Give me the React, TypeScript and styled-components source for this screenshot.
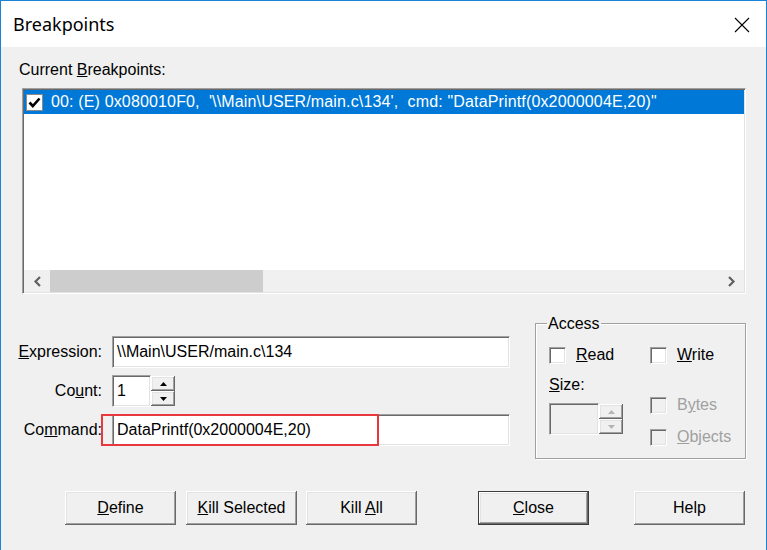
import React from "react";
import styled, { createGlobalStyle } from "styled-components";

const GlobalStyle = createGlobalStyle`
  html, body { margin: 0; padding: 0; background: #ffffff; }
  body {
    font-family: "Liberation Sans", Arial, sans-serif;
    font-size: 16px;
    color: #000000;
  }
  * { box-sizing: border-box; }
`;

const sunken = `
  border-style: solid;
  border-width: 1px;
  border-color: #a0a0a0 #ffffff #ffffff #a0a0a0;
  box-shadow: inset 1px 1px 0 #696969, inset -1px -1px 0 #e3e3e3;
`;

const raised = `
  box-shadow: inset -1px -1px 0 #696969, inset 1px 1px 0 #ffffff,
    inset -2px -2px 0 #a0a0a0, inset 2px 2px 0 #e3e3e3;
`;

const Window = styled.div`
  width: 767px;
  height: 550px;
  display: flex;
  flex-direction: column;
  border: 1px solid #1883d7;
  border-bottom: none;
  overflow: hidden;
`;

const TitleBar = styled.div`
  height: 46px;
  flex-shrink: 0;
  display: flex;
  align-items: center;
  justify-content: space-between;
  padding: 0 16px 0 12px;
  background: #ffffff;
`;

const Title = styled.span`
  font-family: "Noto Sans", "Open Sans", sans-serif;
  font-size: 18px;
  margin-top: -1px;
`;

const CloseGlyph = styled.svg`
  width: 16px;
  height: 16px;
  margin-top: 1px;
`;

const Body = styled.div`
  flex: 1;
  background: #f0f0f0;
  padding: 14px 20px 0 17px;
`;

const SectionLabel = styled.div`
  line-height: 18px;
  padding-left: 1px;
  color: #000;
`;

const ListBox = styled.div`
  ${sunken}
  margin: 9px 0 0 4px;
  height: 206px;
  background: #ffffff;
  display: flex;
  flex-direction: column;
  padding: 1px;
`;

const ListRow = styled.div<{ $selected?: boolean }>`
  height: 24px;
  display: flex;
  align-items: center;
  padding-left: 2px;
  letter-spacing: 0.15px;
  background: ${({ $selected }) => ($selected ? "#0078d7" : "transparent")};
  color: ${({ $selected }) => ($selected ? "#ffffff" : "#000000")};
  white-space: nowrap;
`;

const ListCheck = styled.span`
  width: 17px;
  height: 17px;
  margin-right: 8px;
  background: #ffffff;
  border: 1px solid #8a8a8a;
  display: flex;
  align-items: center;
  justify-content: center;
`;

const ListFill = styled.div`
  flex: 1;
`;

const HScroll = styled.div`
  height: 22px;
  display: flex;
  align-items: stretch;
  background: #f0f0f0;
`;

const ScrollArrow = styled.div`
  width: 26px;
  display: flex;
  align-items: center;
  justify-content: center;
`;

const ScrollThumb = styled.div`
  width: 213px;
  background: #cdcdcd;
`;

const ScrollTrack = styled.div`
  flex: 1;
`;

const Middle = styled.div`
  display: flex;
  align-items: flex-start;
  margin-top: 20px;
`;

const Form = styled.div`
  width: 493px;
  padding-top: 22px;
  display: grid;
  grid-template-columns: 84px 398px;
  column-gap: 10px;
  row-gap: 7px;
`;

const FieldLabel = styled.label`
  text-align: right;
  line-height: 32px;
  white-space: nowrap;
`;

const FieldCell = styled.div`
  position: relative;
  display: flex;
`;

const TextBox = styled.div<{ $width?: number; $disabled?: boolean }>`
  ${sunken}
  width: ${({ $width }) => ($width ? `${$width}px` : "100%")};
  height: 32px;
  background: ${({ $disabled }) => ($disabled ? "#f0f0f0" : "#ffffff")};
  padding-left: 4px;
  display: flex;
  align-items: center;
  white-space: nowrap;
`;

const Spinner = styled.div`
  width: 24px;
  height: 32px;
  display: flex;
  flex-direction: column;
  padding: 1px 0;
`;

const SpinButton = styled.div`
  flex: 1;
  background: #f0f0f0;
  ${raised}
  display: flex;
  align-items: center;
  justify-content: center;
`;

const Highlight = styled.div`
  position: absolute;
  left: -11px;
  top: 0;
  width: 278px;
  height: 32px;
  border: 2px solid #e8383d;
  pointer-events: none;
`;

const Group = styled.fieldset`
  width: 211px;
  height: 145px;
  margin: 0 0 0 24px;
  padding: 0 10px 0 13px;
  border: 1px solid #a0a0a0;
  box-shadow: inset 1px 1px 0 #ffffff, 1px 1px 0 #ffffff;
`;

const Legend = styled.legend`
  padding: 0 1px;
  margin-left: -2px;
  line-height: 19px;
`;

const AccessGrid = styled.div`
  display: grid;
  grid-template-columns: 101px 1fr;
  margin-top: 10px;
`;

const CheckItem = styled.div<{ $disabled?: boolean }>`
  height: 24px;
  display: flex;
  align-items: center;
  gap: 10px;
  color: ${({ $disabled }) => ($disabled ? "#a0a0a0" : "#000000")};
  white-space: nowrap;
`;

const SmallCheck = styled.span<{ $disabled?: boolean }>`
  width: 17px;
  height: 17px;
  flex-shrink: 0;
  ${sunken}
  background: ${({ $disabled }) => ($disabled ? "#f0f0f0" : "#ffffff")};
`;

const SizeColumn = styled.div`
  display: flex;
  flex-direction: column;
  padding-top: 9px;
`;

const SizeLabel = styled.div`
  line-height: 18px;
  margin-bottom: 9px;
`;

const SizeSpin = styled.div`
  display: flex;
  width: 74px;
`;

const OptionColumn = styled.div`
  display: flex;
  flex-direction: column;
  gap: 8px;
  padding-top: 26px;
`;

const ButtonRow = styled.div`
  display: flex;
  margin-top: 32px;
  padding-left: 47px;
`;

const Button = styled.button<{ $offset?: number; $default?: boolean }>`
  width: 111px;
  height: 34px;
  margin-left: ${({ $offset }) => $offset ?? 0}px;
  padding: 0;
  font: inherit;
  color: #000;
  background: #f0f0f0;
  border: ${({ $default }) => ($default ? "1px solid #3c3c3c" : "none")};
  ${raised}
  cursor: default;
`;

const Up = ({ disabled }: { disabled?: boolean }) => (
  <svg width="7" height="4" viewBox="0 0 7 4">
    <path d="M3.5 0L7 4H0z" fill={disabled ? "#b4b4b4" : "#000"} />
  </svg>
);

const Down = ({ disabled }: { disabled?: boolean }) => (
  <svg width="7" height="4" viewBox="0 0 7 4">
    <path d="M0 0H7L3.5 4z" fill={disabled ? "#b4b4b4" : "#000"} />
  </svg>
);

export default function App() {
  return (
    <>
      <GlobalStyle />
      <Window>
        <TitleBar>
          <Title>Breakpoints</Title>
          <CloseGlyph viewBox="0 0 16 16">
            <path d="M1 1L15 15M15 1L1 15" stroke="#000" strokeWidth="1.1" />
          </CloseGlyph>
        </TitleBar>
        <Body>
          <SectionLabel>
            Current <u>B</u>reakpoints:
          </SectionLabel>
          <ListBox>
            <ListRow $selected>
              <ListCheck>
                <svg width="13" height="11" viewBox="0 0 13 11">
                  <path d="M1.5 5.5L4.8 9L11.5 1.5" stroke="#000" strokeWidth="2.6" fill="none" />
                </svg>
              </ListCheck>
              00: (E) 0x080010F0,&nbsp; '\\Main\USER/main.c\134',&nbsp; cmd: "DataPrintf(0x2000004E,20)"
            </ListRow>
            <ListFill />
            <HScroll>
              <ScrollArrow>
                <svg width="9" height="11" viewBox="0 0 9 11">
                  <path d="M7 1L2.5 5.5L7 10" stroke="#606060" strokeWidth="2.2" fill="none" />
                </svg>
              </ScrollArrow>
              <ScrollThumb />
              <ScrollTrack />
              <ScrollArrow>
                <svg width="9" height="11" viewBox="0 0 9 11">
                  <path d="M2 1L6.5 5.5L2 10" stroke="#606060" strokeWidth="2.2" fill="none" />
                </svg>
              </ScrollArrow>
            </HScroll>
          </ListBox>

          <Middle>
            <Form>
              <FieldLabel>
                <u>E</u>xpression:
              </FieldLabel>
              <FieldCell>
                <TextBox>\\Main\USER/main.c\134</TextBox>
              </FieldCell>

              <FieldLabel>
                Co<u>u</u>nt:
              </FieldLabel>
              <FieldCell>
                <TextBox $width={39}>1</TextBox>
                <Spinner>
                  <SpinButton>
                    <Up />
                  </SpinButton>
                  <SpinButton>
                    <Down />
                  </SpinButton>
                </Spinner>
              </FieldCell>

              <FieldLabel>
                Co<u>m</u>mand:
              </FieldLabel>
              <FieldCell>
                <TextBox>DataPrintf(0x2000004E,20)</TextBox>
                <Highlight />
              </FieldCell>
            </Form>

            <Group>
              <Legend>Access</Legend>
              <AccessGrid>
                <CheckItem>
                  <SmallCheck />
                  <span>
                    <u>R</u>ead
                  </span>
                </CheckItem>
                <CheckItem>
                  <SmallCheck />
                  <span>
                    <u>W</u>rite
                  </span>
                </CheckItem>
                <SizeColumn>
                  <SizeLabel>
                    <u>S</u>ize:
                  </SizeLabel>
                  <SizeSpin>
                    <TextBox $width={50} $disabled />
                    <Spinner>
                      <SpinButton>
                        <Up disabled />
                      </SpinButton>
                      <SpinButton>
                        <Down disabled />
                      </SpinButton>
                    </Spinner>
                  </SizeSpin>
                </SizeColumn>
                <OptionColumn>
                  <CheckItem $disabled>
                    <SmallCheck $disabled />
                    <span>
                      B<u>y</u>tes
                    </span>
                  </CheckItem>
                  <CheckItem $disabled>
                    <SmallCheck $disabled />
                    <span>
                      <u>O</u>bjects
                    </span>
                  </CheckItem>
                </OptionColumn>
              </AccessGrid>
            </Group>
          </Middle>

          <ButtonRow>
            <Button>
              <u>D</u>efine
            </Button>
            <Button $offset={10}>
              <u>K</u>ill Selected
            </Button>
            <Button $offset={9}>
              Kill <u>A</u>ll
            </Button>
            <Button $offset={61} $default>
              <u>C</u>lose
            </Button>
            <Button $offset={45}>Help</Button>
          </ButtonRow>
        </Body>
      </Window>
    </>
  );
}
